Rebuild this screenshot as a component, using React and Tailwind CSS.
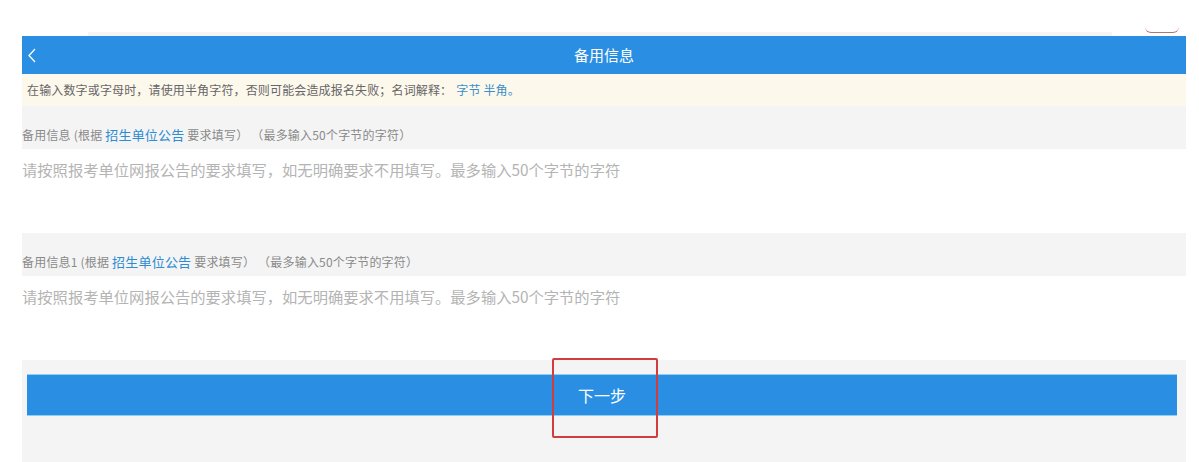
import React from 'react';

const Field = ({ label }) => (
  <div>
    <div className="h-[43px] bg-[#f4f4f4] pt-[22px] text-[12px] leading-[14px] text-[#8a8a8a] whitespace-pre tracking-[0.2px]">
      {label} (根据 <span className="text-[#2d8cd2] text-[13px]">招生单位公告</span> 要求填写） （最多输入50个字节的字符）
    </div>
    <div className="h-[84px] bg-white pt-[11px] text-[15.3px] leading-[18px] text-[#b4b4b4]">
      请按照报考单位网报公告的要求填写，如无明确要求不用填写。最多输入50个字节的字符
    </div>
  </div>
);

export default function App() {
  return (
    <div className="relative w-[1199px] h-[462px] overflow-hidden bg-white font-['Microsoft_YaHei','Noto_Sans_CJK_SC',sans-serif]">
      {/* top strip */}
      <div className="h-[36px] flex items-end">
        <div className="ml-[88px] w-[1024px] h-[4px] bg-[#f5f5f5]"></div>
        <div className="ml-[33px] mb-[3px] w-[34px] h-[6px] rounded-b-full border-b border-[#b0786c]"></div>
      </div>

      <div className="ml-[22px] w-[1164px]">
        {/* header */}
        <div className="relative h-[38px] bg-[#2a8fe3] flex items-center justify-center">
          <svg className="absolute left-[5px] top-[12px]" width="10" height="15" viewBox="0 0 10 15">
            <polyline points="8,1 2,7.5 8,14" fill="none" stroke="white" strokeWidth="1.3" />
          </svg>
          <span className="text-white text-[15px]">备用信息</span>
        </div>

        {/* notice */}
        <div className="h-[32px] bg-[#fdf8ec] pl-[5px] pt-[8px] text-[12px] leading-[16px] text-[#666] tracking-[0.15px]">
          在输入数字或字母时，请使用半角字符，否则可能会造成报名失败；名词解释：
          <span className="ml-[4px] text-[#3a8fcb]">字节 半角。</span>
        </div>

        <Field label="备用信息" />
        <Field label="备用信息1" />

        {/* footer */}
        <div className="h-[103px] bg-[#f4f4f4] pt-[14px]">
          <div className="ml-[5px] mr-[9px] h-[42px] bg-[#2a8fe3] border-y border-[#8fcdf2] flex items-center justify-center text-white text-[16px]">
            下一步
          </div>
        </div>
      </div>

      <div className="absolute left-[552px] top-[358px] w-[106px] h-[80px] border-2 border-[#d23c3c] rounded-[2px]"></div>
    </div>
  );
}
